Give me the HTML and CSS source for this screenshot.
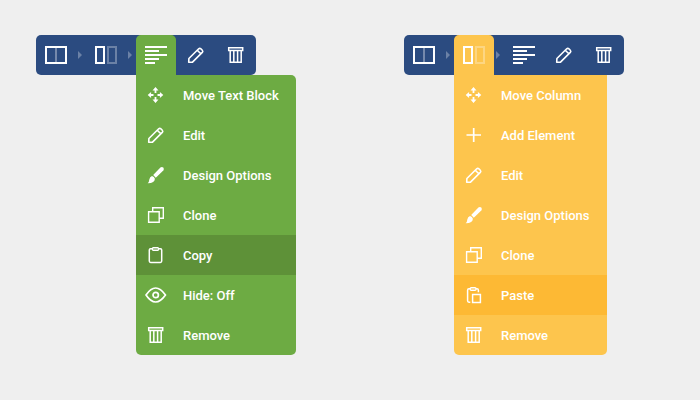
FILE: index.html
```html
<!DOCTYPE html>
<html lang="en">
<head>
    <meta charset="UTF-8">
    <meta name="viewport" content="width=device-width, initial-scale=1.0">
    <title>Element Controls</title>
    <link rel="stylesheet" href="styles.css">
</head>
<body>
    <!-- Shared icons -->
    <svg class="sprite" aria-hidden="true">
        <symbol id="icon-row" viewBox="0 0 22 22">
            <path d="M11 4v14" stroke-width="2" opacity=".35"/>
            <rect x="1" y="3" width="20" height="16" stroke-width="2"/>
        </symbol>
        <symbol id="icon-column" viewBox="0 0 22 22">
            <rect x="1" y="3" width="8" height="16" stroke-width="2"/>
            <rect x="13" y="3" width="8" height="16" stroke-width="2" opacity=".3"/>
        </symbol>
        <symbol id="icon-text" viewBox="0 0 22 22">
            <path d="M0 3h22M0 7h14M0 11h22M0 15h14M0 19h10" stroke-width="2"/>
        </symbol>
        <symbol id="icon-move" viewBox="0 0 22 22">
            <path d="M10.5 5v4M10.5 13v4M5 11h3.5M12.5 11H16" stroke-width="1.8"/>
            <path d="M10.5 3l3 3.4h-6zM10.5 19l3-3.4h-6zM2.7 11l3.4-3v6zM18.3 11l-3.4-3v6z" fill="currentColor" stroke="none"/>
        </symbol>
        <symbol id="icon-edit" viewBox="0 0 22 22">
            <path d="M3.7 18.2l.2-3.7 9.8-9.7q1.1-1 2.2 0l1.4 1.4q1 1.1 0 2.2L7.5 18.1zM12.3 6.3l3.5 3.5" stroke-width="1.6" stroke-linejoin="round"/>
        </symbol>
        <symbol id="icon-brush" viewBox="0 0 22 22">
            <path d="M8.2 11L15.4 3.5q1.5-1.2 2.9.1 1.1 1.4 0 2.8l-7.5 7.4z" fill="currentColor" stroke="none"/>
            <path d="M7 12.1q2.3.5 2.9 2.7-.2 4.5-7.2 4.4 1.5-1.2 1.6-3.6.5-2.7 2.7-3.5z" fill="currentColor" stroke="none"/>
        </symbol>
        <symbol id="icon-clone" viewBox="0 0 22 22">
            <path d="M3.6 7.7h10.6v10.6H3.6zM7.7 7.5V3.7h10.6v10.6h-3.8" stroke-width="1.4"/>
        </symbol>
        <symbol id="icon-copy" viewBox="0 0 22 22">
            <path d="M7.5 4.8h-2q-1.2 0-1.2 1.2v11.1q0 1.3 1.3 1.3h9.8q1.3 0 1.3-1.3V6q0-1.2-1.2-1.2h-2" stroke-width="1.5"/>
            <rect x="7.4" y="3.7" width="6.2" height="2.6" rx="1" stroke-width="1.4"/>
        </symbol>
        <symbol id="icon-paste" viewBox="0 0 22 22">
            <path d="M7.3 18.2H6q-1.4 0-1.4-1.4V6.2q0-1.4 1.4-1.4h1.4M12.8 4.8H14q1.4 0 1.4 1.4v2" stroke-width="1.5"/>
            <rect x="7.2" y="3.7" width="5.8" height="2.5" rx="1" stroke-width="1.4"/>
            <path d="M9.6 10.6h7.8v7.8H9.6z" stroke-width="1.5"/>
        </symbol>
        <symbol id="icon-eye" viewBox="0 0 22 22">
            <path d="M1 11q9.5-14 19.5 0-10 14-19.5 0z" stroke-width="1.7" stroke-linejoin="round"/>
            <circle cx="10.7" cy="11" r="2.7" stroke-width="1.7"/>
        </symbol>
        <symbol id="icon-trash" viewBox="0 0 22 22">
            <path d="M3.7 3.8h14v2.8h-14zM5.2 6.6v11.6h11V6.6M8.8 6.6v11.4M12.6 6.6v11.4" stroke-width="1.5"/>
        </symbol>
        <symbol id="icon-add" viewBox="0 0 22 22">
            <path d="M3.5 11h14.5M10.7 4v14" stroke-width="1.7"/>
        </symbol>
    </svg>

    <main class="controls">
        <div class="control green">
            <nav class="toolbar" aria-label="Text block controls">
                <button class="tool" type="button" aria-label="Row"><svg class="icon"><use href="#icon-row"/></svg></button>
                <span class="arrow"></span>
                <button class="tool" type="button" aria-label="Column"><svg class="icon"><use href="#icon-column"/></svg></button>
                <span class="arrow"></span>
                <button class="tool active" type="button" aria-label="Text Block" aria-expanded="true"><svg class="icon"><use href="#icon-text"/></svg></button>
                <button class="tool" type="button" aria-label="Edit"><svg class="icon"><use href="#icon-edit"/></svg></button>
                <button class="tool" type="button" aria-label="Remove"><svg class="icon"><use href="#icon-trash"/></svg></button>
            </nav>
            <div class="menu">
                <button class="item" type="button"><svg class="icon"><use href="#icon-move"/></svg>Move Text Block</button>
                <button class="item" type="button"><svg class="icon"><use href="#icon-edit"/></svg>Edit</button>
                <button class="item" type="button"><svg class="icon"><use href="#icon-brush"/></svg>Design Options</button>
                <button class="item" type="button"><svg class="icon"><use href="#icon-clone"/></svg>Clone</button>
                <button class="item selected" type="button"><svg class="icon"><use href="#icon-copy"/></svg>Copy</button>
                <button class="item" type="button"><svg class="icon"><use href="#icon-eye"/></svg>Hide: Off</button>
                <button class="item" type="button"><svg class="icon"><use href="#icon-trash"/></svg>Remove</button>
            </div>
        </div>

        <div class="control yellow">
            <nav class="toolbar" aria-label="Column controls">
                <button class="tool" type="button" aria-label="Row"><svg class="icon"><use href="#icon-row"/></svg></button>
                <span class="arrow"></span>
                <button class="tool active" type="button" aria-label="Column" aria-expanded="true"><svg class="icon"><use href="#icon-column"/></svg></button>
                <span class="arrow"></span>
                <button class="tool" type="button" aria-label="Text Block"><svg class="icon"><use href="#icon-text"/></svg></button>
                <button class="tool" type="button" aria-label="Edit"><svg class="icon"><use href="#icon-edit"/></svg></button>
                <button class="tool" type="button" aria-label="Remove"><svg class="icon"><use href="#icon-trash"/></svg></button>
            </nav>
            <div class="menu">
                <button class="item" type="button"><svg class="icon"><use href="#icon-move"/></svg>Move Column</button>
                <button class="item" type="button"><svg class="icon"><use href="#icon-add"/></svg>Add Element</button>
                <button class="item" type="button"><svg class="icon"><use href="#icon-edit"/></svg>Edit</button>
                <button class="item" type="button"><svg class="icon"><use href="#icon-brush"/></svg>Design Options</button>
                <button class="item" type="button"><svg class="icon"><use href="#icon-clone"/></svg>Clone</button>
                <button class="item selected" type="button"><svg class="icon"><use href="#icon-paste"/></svg>Paste</button>
                <button class="item" type="button"><svg class="icon"><use href="#icon-trash"/></svg>Remove</button>
            </div>
        </div>
    </main>
</body>
</html>
```
FILE: styles.css
```css
* {
    box-sizing: border-box;
}
body {
    margin: 0;
    background-color: #efefef;
    font-family: Roboto, "Liberation Sans", sans-serif;
}
button {
    border: none;
    background: none;
    color: white;
    font: inherit;
    cursor: pointer;
}
.sprite {
    display: none;
}
.controls {
    display: grid;
    grid-template-columns: 1fr 1fr;
    gap: 36px;
    padding: 35px 0 45px 36px;
}
.control {
    display: flex;
    flex-direction: column;
    align-items: flex-start;
}
.yellow {
    padding-left: 18px;
}
.toolbar {
    display: flex;
    background-color: #2b4b80;
    border-radius: 5px;
}
.tool {
    display: flex;
    width: 40px;
    height: 40px;
    padding: 9px;
}
.icon {
    flex: none;
    width: 22px;
    height: 22px;
    fill: none;
    stroke: currentColor;
}
.arrow {
    display: flex;
    align-items: center;
    width: 10px;
    padding-left: 2px;
}
.arrow::before {
    content: "";
    border: 4px solid transparent;
    border-left-color: #6b81a6;
    border-right: none;
}
.active {
    border-radius: 5px 5px 0 0;
}
.menu {
    overflow: hidden;
    border-radius: 0 0 5px 5px;
}
/* Each menu hangs below its own tool */
.green .menu {
    margin-left: 100px;
    border-top-right-radius: 5px;
}
.yellow .menu {
    margin-left: 50px;
}
.green .active, .green .menu {
    background-color: #6dab43;
}
.green .selected {
    background-color: #5e9138;
}
.yellow .active, .yellow .menu {
    background-color: #fdc54d;
}
.yellow .selected {
    background-color: #fdb934;
}
.item {
    display: flex;
    align-items: center;
    gap: 16px;
    width: 100%;
    height: 40px;
    padding: 0 17px 0 9px;
    font-size: 13px;
    font-weight: 500;
    white-space: nowrap;
}
.item:hover {
    background-color: rgba(0, 0, 0, 0.1);
}
```
